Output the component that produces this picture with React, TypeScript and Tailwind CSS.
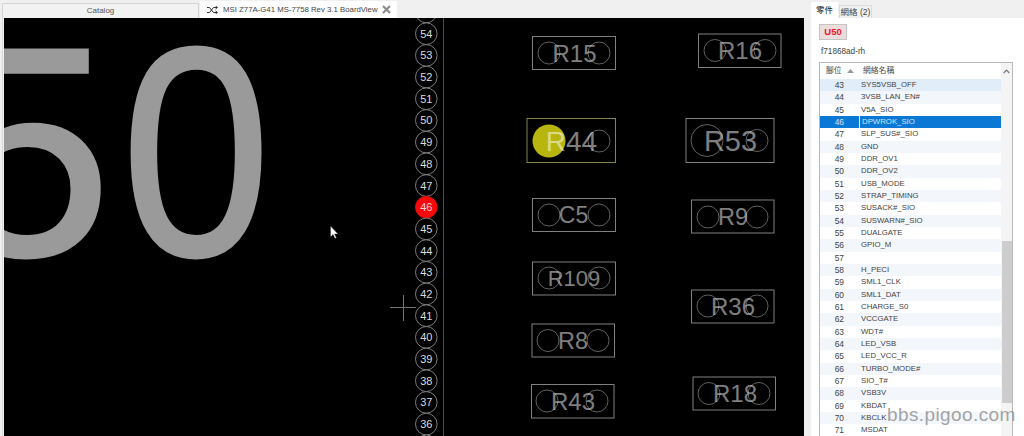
const FONT = "font-['Liberation_Sans','Noto_Sans_CJK_TC',sans-serif]";

type Part = {
  label: string; x: number; y: number; w: number; h: number;
  lx: number; rx: number; cy: number; lr?: number; fs: number; tx: number; hot?: boolean;
};

const parts: Part[] = [
  { label: "R15", x: 532.5, y: 36.5, w: 83, h: 33, lx: 549, rx: 599, cy: 53, fs: 24, tx: 574.5 },
  { label: "R44", x: 527, y: 118.5, w: 88.5, h: 44, lx: 549, rx: 599, cy: 141, lr: 16.5, fs: 28, tx: 571.5, hot: true },
  { label: "C5", x: 532.5, y: 198.5, w: 83, h: 33, lx: 549, rx: 599, cy: 215, fs: 23, tx: 573.5 },
  { label: "R109", x: 532.5, y: 262, w: 83, h: 33, lx: 549, rx: 599, cy: 278, fs: 22, tx: 574 },
  { label: "R8", x: 532, y: 324, w: 82.5, h: 33, lx: 548, rx: 598, cy: 340.5, fs: 23.5, tx: 573 },
  { label: "R43", x: 531.5, y: 384.5, w: 82.5, h: 33.5, lx: 547, rx: 597, cy: 401, fs: 24, tx: 573 },
  { label: "R16", x: 698.5, y: 34, w: 82.5, h: 33.5, lx: 715, rx: 765, cy: 50.5, fs: 24, tx: 740 },
  { label: "R53", x: 686, y: 118.5, w: 88, h: 44, lx: 707, rx: 757, cy: 140.5, lr: 16, fs: 29, tx: 730.5 },
  { label: "R9", x: 691.5, y: 200, w: 82.5, h: 33, lx: 708, rx: 757, cy: 217, fs: 23.5, tx: 733 },
  { label: "R36", x: 691.5, y: 290, w: 82.5, h: 33, lx: 708, rx: 757, cy: 306, fs: 24, tx: 733 },
  { label: "R18", x: 693, y: 377, w: 82.5, h: 33, lx: 709, rx: 759, cy: 393.5, fs: 24, tx: 735 },
];

const pins = Array.from({ length: 21 }, (_, i) => 55 - i);

const nets: [number, string][] = [
  [43, "SYS5VSB_OFF"], [44, "3VSB_LAN_EN#"], [45, "V5A_SIO"], [46, "DPWROK_SIO"], [47, "SLP_SUS#_SIO"],
  [48, "GND"], [49, "DDR_OV1"], [50, "DDR_OV2"], [51, "USB_MODE"], [52, "STRAP_TIMING"],
  [53, "SUSACK#_SIO"], [54, "SUSWARN#_SIO"], [55, "DUALGATE"], [56, "GPIO_M"], [57, ""],
  [58, "H_PECI"], [59, "SML1_CLK"], [60, "SML1_DAT"], [61, "CHARGE_S0"], [62, "VCCGATE"],
  [63, "WDT#"], [64, "LED_VSB"], [65, "LED_VCC_R"], [66, "TURBO_MODE#"], [67, "SIO_T#"],
  [68, "VSB3V"], [69, "KBDAT"], [70, "KBCLK"], [71, "MSDAT"],
];

function Board() {
  return (
    <svg viewBox="4 18 800 418" className="block h-full w-full" fontFamily="'Liberation Sans', sans-serif">
      <g aria-label="50" fill="#9a9a9a" stroke="#9a9a9a" strokeWidth={3} fontSize={298}>
        <text x={-54} y={255}>5</text>
        <text transform="translate(196 0) scale(0.9 1)" x={-82.8} y={255}>0</text>
      </g>
      <line x1={443.5} y1={18} x2={443.5} y2={436} stroke="#a81c30" strokeWidth={1} />
      {pins.map((n, i) => {
        const y = 12 + i * 21.69;
        const red = n === 46;
        return (
          <g key={n}>
            <circle cx={426.3} cy={y} r={10.8} fill={red ? "#f40a0a" : "#000"} stroke={red ? "#f40a0a" : "#9a9a9a"} strokeWidth={0.8} />
            <text x={426.3} y={y + 4} fontSize={11} textAnchor="middle" fill={red ? "#ffd0d0" : "#dcdcdc"}>{n}</text>
          </g>
        );
      })}
      {parts.map((p) => (
        <g key={p.label}>
          <rect x={p.x} y={p.y} width={p.w} height={p.h} fill="none" stroke={p.hot ? "#83834e" : "#808080"} strokeWidth={1} />
          {p.hot ? (
            <circle cx={p.lx} cy={p.cy} r={p.lr} fill="#b8b50f" />
          ) : (
            <circle cx={p.lx} cy={p.cy} r={p.lr ?? 11} fill="none" stroke="#787878" strokeWidth={0.8} />
          )}
          <circle cx={p.rx} cy={p.cy} r={11} fill="none" stroke="#787878" strokeWidth={0.8} />
          <text x={p.tx} y={p.cy + p.fs * 0.36} fontSize={p.fs} textAnchor="middle" fill="#fff" fillOpacity={0.5}>{p.label}</text>
        </g>
      ))}
      <path d="M390 307.5H416M403.5 295V321" stroke="#747474" strokeWidth={1} fill="none" />
      <path d="M330.5 226v11l2.6-2.4 1.8 3.9 1.5-.7-1.8-3.8h3.4z" fill="#fff" stroke="#222" strokeWidth={0.4} />
    </svg>
  );
}

function Shuffle() {
  return (
    <svg width="11" height="8" viewBox="0 0 11 8" fill="none" stroke="#333" strokeWidth="1" className="shrink-0">
      <path d="M0 1.5h2.5l4 5H10M0 6.5h2.5l4-5H10M8.5 0 10.5 1.5 8.5 3M8.5 5l2 1.5-2 1.5" />
    </svg>
  );
}

export default function App() {
  return (
    <div className={`relative flex h-[436px] w-[1024px] overflow-hidden bg-[#f0f0f0] text-[#333] ${FONT}`}>
      <div className="flex w-[811px] flex-col">
        <div className="flex h-[18px] items-end pl-[2px]">
          <div className="flex h-[15px] w-[197px] items-center justify-center border border-b-0 border-[#d4d4d4] bg-[#f2f2f2] text-[8px] text-[#555]">
            Catalog
          </div>
          <div className="ml-[1px] flex h-[17px] w-[197px] items-center bg-white pl-[7px] pr-[6px] text-[7.8px] whitespace-nowrap text-[#444]">
            <Shuffle />
            <span className="ml-[5px] flex-1">MSI Z77A-G41 MS-7758 Rev 3.1 BoardView</span>
            <svg width="9" height="9" viewBox="0 0 9 9" stroke="#8c8c8c" strokeWidth="2.2" className="shrink-0">
              <path d="M1 1l7 7M8 1l-7 7" />
            </svg>
          </div>
        </div>
        <div className="ml-[2px] flex min-h-0 flex-1 pr-[7px]">
          <div className="w-[1px] bg-[#d8d8d8]" />
          <div className="w-[1px] bg-[#f0f0f0]" />
          <div className="h-full w-[800px] bg-black">
            <Board />
          </div>
        </div>
      </div>

      <div className="flex min-w-0 flex-1 flex-col">
        <div className="flex h-[18px] items-end text-[8.5px]">
          <div className="flex h-[16px] w-[27px] items-center justify-center bg-white text-[#222]">零件</div>
          <div className="ml-[1px] flex h-[13px] w-[33px] items-center justify-center border border-b-0 border-[#dcdcdc] bg-[#f0f0f0] text-[#444]">網絡 (2)</div>
        </div>
        <div className="flex min-h-0 flex-1 flex-col bg-white pl-[8px] pr-[11px]">
          <div className="mt-[6px] flex h-[16px] w-[28px] items-center justify-center border border-[#c4c4c4] bg-[#eddcdc] text-[9.5px] font-bold text-[#e0202c]">U50</div>
          <div className="mt-[6px] ml-[2px] h-[12px] text-[8.2px] leading-[12px] text-[#444]">f71868ad-rh</div>
          <div className="mt-[4px] flex min-h-0 flex-1 border border-b-0 border-[#b8b8b8]">
            <div className="min-w-0 flex-1 overflow-hidden">
              <div className="flex h-[16px] items-center text-[7.8px] text-[#444]">
                <div className="flex w-[39px] items-center pl-[6px]">
                  腳位
                  <svg width="7" height="4" viewBox="0 0 7 4" className="ml-[5px]"><path d="M0 4 3.5 0 7 4z" fill="#9a9a9a" /></svg>
                </div>
                <div className="pl-[4px]">網絡名稱</div>
              </div>
              {nets.map(([n, name]) => {
                const sel = n === 46;
                const hover = n === 43;
                const even = n % 2 === 0;
                const bg = sel ? "bg-[#0a78d4]" : hover ? "bg-[#e2edfa]" : even ? "bg-[#f3f6fb]" : "bg-white";
                return (
                  <div key={n} className={`flex h-[12.33px] items-center text-[7.8px] leading-[12px] ${bg} ${sel ? "text-[#cfe6fa]" : "text-[#444]"}`}>
                    <div className="w-[39px] pr-[15px] text-right text-[8.4px]">{n}</div>
                    <div className={`h-full pl-[2px] ${sel ? "border-l border-white pl-[1px]" : ""}`}>{name}</div>
                  </div>
                );
              })}
            </div>
            <div className="flex w-[11px] flex-col bg-[#f4f4f4]">
              <div className="flex h-[178px] shrink-0 justify-center pt-[6px]">
                <svg width="7" height="5" viewBox="0 0 7 5" fill="none" stroke="#777" strokeWidth="1.2"><path d="M.7 4 3.5 1.2 6.3 4" /></svg>
              </div>
              <div className="mx-auto h-[162px] w-[10px] bg-[#cdcdcd]" />
            </div>
          </div>
        </div>
      </div>

      <div className="absolute left-[887px] top-[401px] text-[19px] leading-[28px] tracking-[0.4px] text-[#8c8c8c]/80">bbs.pigoo.com</div>
    </div>
  );
}
